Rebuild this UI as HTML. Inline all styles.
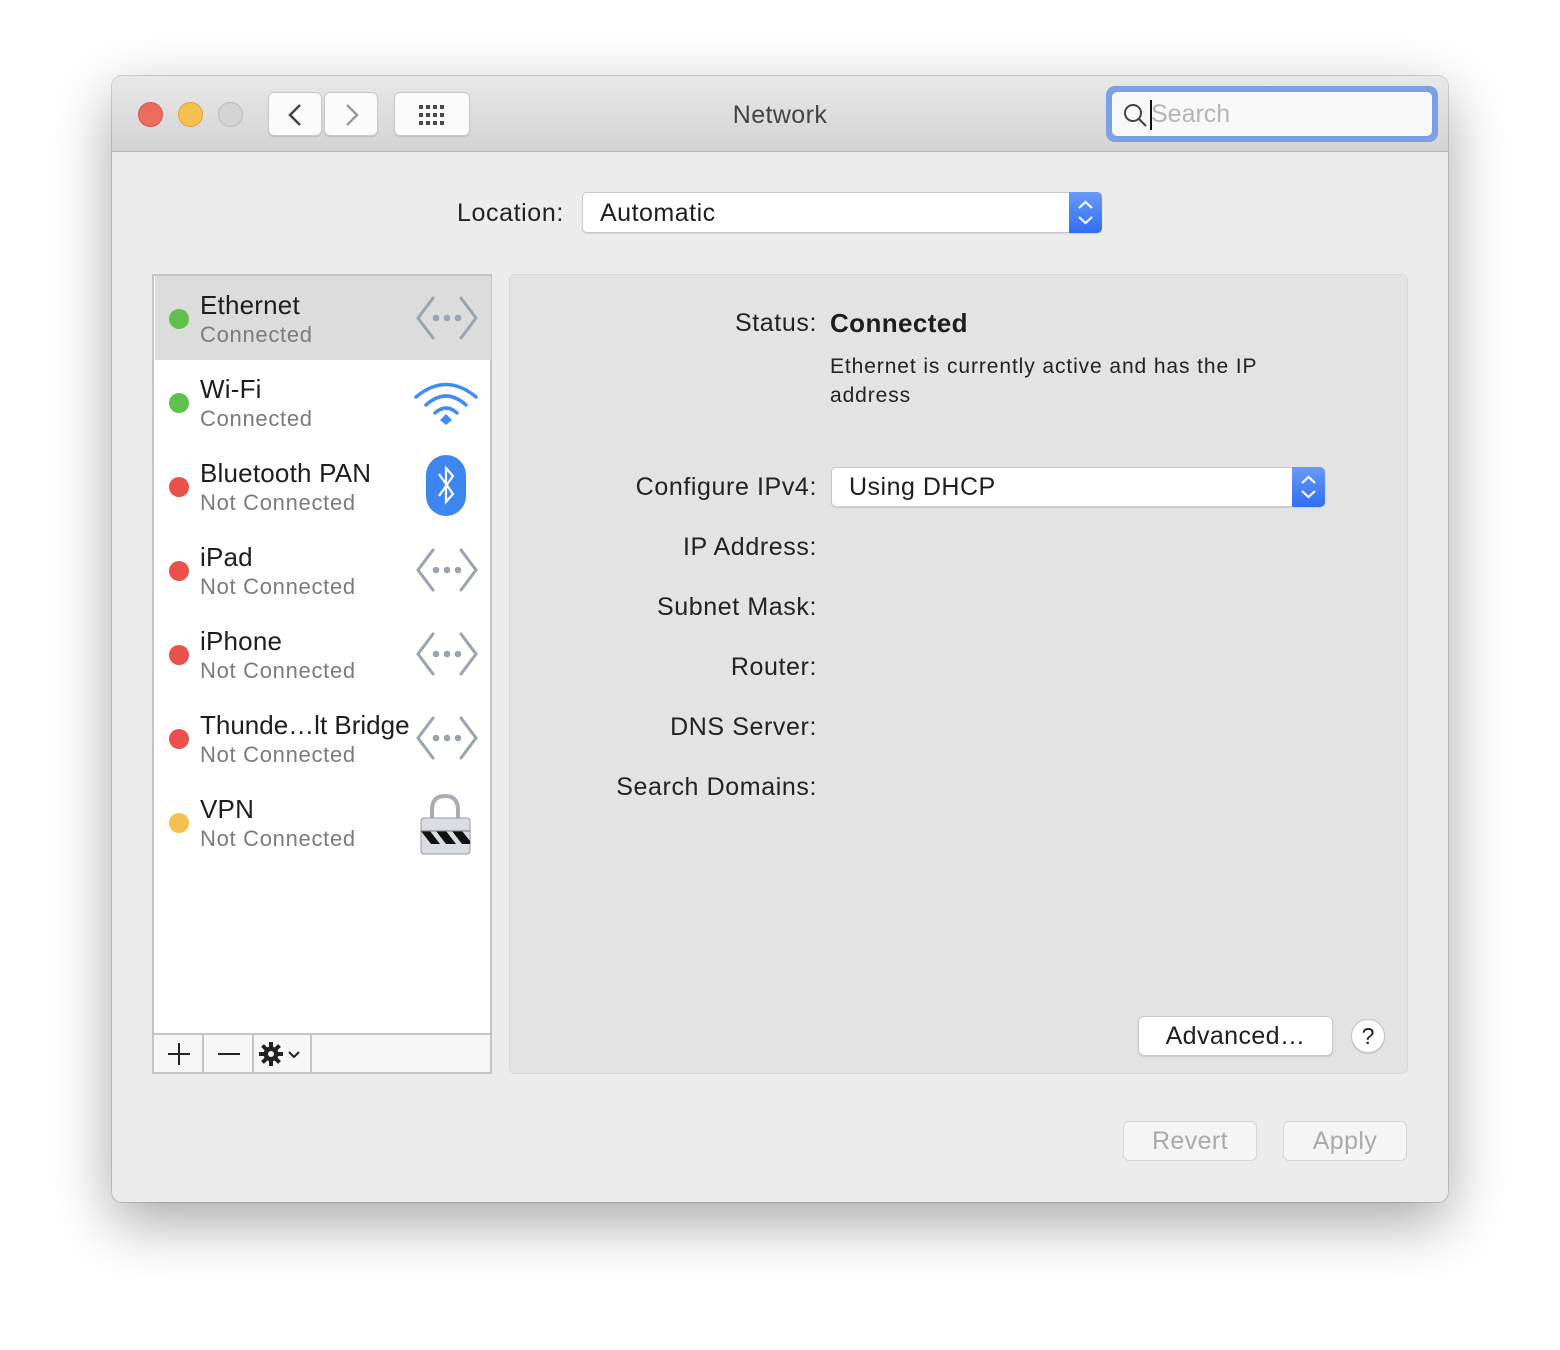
<!DOCTYPE html>
<html><head><meta charset="utf-8"><style>
*{box-sizing:border-box;margin:0;padding:0}
body{width:1560px;height:1350px;background:#fff;font-family:"Liberation Sans",sans-serif;position:relative;overflow:hidden}
.win{position:absolute;left:112px;top:76px;width:1336px;height:1126px;background:#ececec;border-radius:10px;box-shadow:0 20px 60px rgba(0,0,0,.35),0 0 0 1px rgba(0,0,0,.15);overflow:hidden}
.tb{position:absolute;left:0;top:0;width:100%;height:76px;background:linear-gradient(#e8e8e8,#d3d3d3);border-bottom:1px solid #b5b5b5}
.dot{position:absolute;top:26px;width:25px;height:25px;border-radius:50%}
.btn{position:absolute;background:#fbfbfb;border:1px solid #c8c8c8;border-radius:6px;box-shadow:0 1px 1px rgba(0,0,0,.12)}
.abs{position:absolute}
.lbl{position:absolute;font-size:25px;color:#222;text-align:right;letter-spacing:0.6px}
.row{position:absolute;left:1px;width:336px;height:84px}
.row .n{position:absolute;left:45px;top:14px;font-size:26px;color:#1e1e1e;letter-spacing:0.2px}
.row .s{position:absolute;left:45px;top:46px;font-size:22px;color:#7b7b7b;letter-spacing:0.7px}
.row .d{position:absolute;left:14px;top:33px;width:20px;height:20px;border-radius:50%}
.row svg{position:absolute;left:260px;top:20px}
</style></head><body>
<div class="win">
 <div class="tb">
  <div class="dot" style="left:26px;background:#ed6a5e;border:1px solid #d5554a"></div>
  <div class="dot" style="left:66px;background:#f5c04f;border:1px solid #d9a43a"></div>
  <div class="dot" style="left:106px;background:#d4d4d4;border:1px solid #bbb"></div>
  <div class="btn" style="left:156px;top:16px;width:54px;height:44px"><svg width="54" height="44"><path d="M31 12 L21 22 L31 32" stroke="#444" stroke-width="2.5" fill="none"/></svg></div>
  <div class="btn" style="left:212px;top:16px;width:54px;height:44px"><svg width="54" height="44"><path d="M22 12 L32 22 L22 32" stroke="#999" stroke-width="2.5" fill="none"/></svg></div>
  <div class="btn" style="left:282px;top:16px;width:76px;height:44px"><svg width="76" height="44"><g fill="#4a4a4a"><rect x="24" y="12" width="4" height="4"/><rect x="31" y="12" width="4" height="4"/><rect x="38" y="12" width="4" height="4"/><rect x="45" y="12" width="4" height="4"/><rect x="24" y="20" width="4" height="4"/><rect x="31" y="20" width="4" height="4"/><rect x="38" y="20" width="4" height="4"/><rect x="45" y="20" width="4" height="4"/><rect x="24" y="28" width="4" height="4"/><rect x="31" y="28" width="4" height="4"/><rect x="38" y="28" width="4" height="4"/><rect x="45" y="28" width="4" height="4"/></g></svg></div>
  <div class="abs" style="left:0;width:100%;top:25px;text-align:center;font-size:25px;color:#444;letter-spacing:0.4px">Network</div>
  <div class="abs" style="left:994px;top:10px;width:332px;height:56px;border-radius:9px;background:#7e9fe2"></div>
  <div class="abs" style="left:1000px;top:16px;width:320px;height:44px;border-radius:5px;background:#f8f8f8"><svg class="abs" style="left:10px;top:10px" width="28" height="28"><circle cx="11" cy="11" r="8" stroke="#444" stroke-width="2" fill="none"/><path d="M17 17 L24 24" stroke="#444" stroke-width="2.2"/></svg><div class="abs" style="left:38px;top:8px;width:2px;height:30px;background:#111"></div><div class="abs" style="left:39px;top:8px;font-size:25px;color:#b5b5b5">Search</div></div>
 </div>
 <div class="lbl" style="left:345px;top:123px;text-align:left">Location:</div>
 <div class="abs" style="left:470px;top:116px;width:520px;height:41px;background:#fff;border:1px solid #c8c8c8;border-radius:5px;box-shadow:0 1px 1px rgba(0,0,0,.1)"><div class="abs" style="left:17px;top:6px;font-size:25px;color:#1e1e1e;letter-spacing:0.5px">Automatic</div><div class="abs" style="right:-1px;top:-1px;width:33px;height:41px;background:linear-gradient(#6a9bf7,#2f6ef2);border-radius:0 5px 5px 0"><svg width="33" height="41"><path d="M10 16 L16.5 10 L23 16 M10 25 L16.5 31 L23 25" stroke="#fff" stroke-width="2.2" fill="none"/></svg></div></div>

 <div class="abs" style="left:40px;top:198px;width:340px;height:800px;background:#fff;border:2px solid #c4c4c4">
  <div class="row" style="top:0;background:#dcdcdc"><div class="d" style="background:#5fc04e"></div><div class="n">Ethernet</div><div class="s">Connected</div>
   <svg width="64" height="44"><g stroke="#9aa3b2" stroke-width="3" fill="none" stroke-linecap="round"><path d="M18 2 L3 22 L18 42 M46 2 L61 22 L46 42"/></g><g fill="#9aa3b2"><circle cx="21" cy="22" r="3.3"/><circle cx="32" cy="22" r="3.3"/><circle cx="43" cy="22" r="3.3"/></g></svg></div>
  <div class="row" style="top:84px"><div class="d" style="background:#5fc04e"></div><div class="n">Wi-Fi</div><div class="s">Connected</div>
   <svg width="66" height="50" style="top:18px;left:258px"><g stroke="#3e8ef0" stroke-width="3.5" fill="none" stroke-linecap="round"><path d="M3 19 Q33 -6 63 19"/><path d="M13 27 Q33 9 53 27"/><path d="M22 35 Q33 25 44 35"/></g><path d="M27 42 L33 36 L39 42 L33 47Z" fill="#3e8ef0"/></svg></div>
  <div class="row" style="top:168px"><div class="d" style="background:#e9524a"></div><div class="n">Bluetooth PAN</div><div class="s">Not Connected</div>
   <svg width="64" height="64" style="top:10px;left:258px"><rect x="13" y="1" width="40" height="61" rx="20" fill="#3d85ef"/><path d="M26 20 L40 40 L33 48 L33 14 L40 22 L26 42" stroke="#fff" stroke-width="2.2" fill="none"/></svg></div>
  <div class="row" style="top:252px"><div class="d" style="background:#e9524a"></div><div class="n">iPad</div><div class="s">Not Connected</div>
   <svg width="64" height="44"><g stroke="#9aa3b2" stroke-width="3" fill="none" stroke-linecap="round"><path d="M18 2 L3 22 L18 42 M46 2 L61 22 L46 42"/></g><g fill="#9aa3b2"><circle cx="21" cy="22" r="3.3"/><circle cx="32" cy="22" r="3.3"/><circle cx="43" cy="22" r="3.3"/></g></svg></div>
  <div class="row" style="top:336px"><div class="d" style="background:#e9524a"></div><div class="n">iPhone</div><div class="s">Not Connected</div>
   <svg width="64" height="44"><g stroke="#9aa3b2" stroke-width="3" fill="none" stroke-linecap="round"><path d="M18 2 L3 22 L18 42 M46 2 L61 22 L46 42"/></g><g fill="#9aa3b2"><circle cx="21" cy="22" r="3.3"/><circle cx="32" cy="22" r="3.3"/><circle cx="43" cy="22" r="3.3"/></g></svg></div>
  <div class="row" style="top:420px"><div class="d" style="background:#e9524a"></div><div class="n" style="letter-spacing:0">Thunde…lt Bridge</div><div class="s">Not Connected</div>
   <svg width="64" height="44"><g stroke="#9aa3b2" stroke-width="3" fill="none" stroke-linecap="round"><path d="M18 2 L3 22 L18 42 M46 2 L61 22 L46 42"/></g><g fill="#9aa3b2"><circle cx="21" cy="22" r="3.3"/><circle cx="32" cy="22" r="3.3"/><circle cx="43" cy="22" r="3.3"/></g></svg></div>
  <div class="row" style="top:504px"><div class="d" style="background:#f5c04f"></div><div class="n">VPN</div><div class="s">Not Connected</div>
   <svg width="64" height="66" style="top:10px;left:257px"><path d="M20 30 V20 Q20 6 33 6 Q46 6 46 20 V30" stroke="#a8adb5" stroke-width="4" fill="none"/><rect x="9" y="28" width="49" height="36" rx="3" fill="#d9dde3" stroke="#999" stroke-width="1"/><path d="M9 41 H18 L28 54 H19Z M24 41 H34 L44 54 H34Z M40 41 H50 L58 51 V54 H50Z" fill="#111"/><path d="M9 41 H58" stroke="#777"/></svg></div>
  <div class="abs" style="left:0;top:757px;width:336px;height:39px;background:#f6f6f6;border-top:2px solid #c4c4c4">
   <div class="abs" style="left:48px;top:0;width:2px;height:39px;background:#c4c4c4"></div>
   <div class="abs" style="left:98px;top:0;width:2px;height:39px;background:#c4c4c4"></div>
   <div class="abs" style="left:156px;top:0;width:2px;height:39px;background:#c4c4c4"></div>
   <svg class="abs" style="left:0;top:0" width="160" height="38"><path d="M14 19 H36 M25 8 V30 M64 19 H86" stroke="#222" stroke-width="2"/><g transform="translate(117 19)"><circle r="7.5" fill="#222"/><g stroke="#222" stroke-width="4"><path d="M0 -12 V12 M-12 0 H12 M-8.5 -8.5 L8.5 8.5 M-8.5 8.5 L8.5 -8.5"/></g><circle r="3" fill="#f6f6f6"/></g><path d="M135 17 L140 22 L145 17" stroke="#222" stroke-width="2" fill="none"/></svg>
  </div>
 </div>

 <div class="abs" style="left:397px;top:198px;width:899px;height:800px;background:#e3e3e3;border:1px solid #d8d8d8;border-radius:6px"></div>
 <div class="lbl" style="top:233px;right:631px">Status:</div>
 <div class="abs" style="left:718px;top:232px;font-size:26px;font-weight:bold;color:#1e1e1e;letter-spacing:0.4px">Connected</div>
 <div class="abs" style="left:718px;top:276px;font-size:21px;line-height:29px;color:#222;width:470px;letter-spacing:0.9px">Ethernet is currently active and has the IP address</div>
 <div class="lbl" style="top:397px;right:631px">Configure IPv4:</div>
 <div class="abs" style="left:719px;top:391px;width:494px;height:40px;background:#fff;border:1px solid #c8c8c8;border-radius:5px;box-shadow:0 1px 1px rgba(0,0,0,.1)"><div class="abs" style="left:17px;top:5px;font-size:25px;color:#1e1e1e;letter-spacing:0.5px">Using DHCP</div><div class="abs" style="right:-1px;top:-1px;width:33px;height:40px;background:linear-gradient(#6a9bf7,#2f6ef2);border-radius:0 5px 5px 0"><svg width="33" height="40"><path d="M10 16 L16.5 10 L23 16 M10 24 L16.5 30 L23 24" stroke="#fff" stroke-width="2.2" fill="none"/></svg></div></div>
 <div class="lbl" style="top:457px;right:631px">IP Address:</div>
 <div class="lbl" style="top:517px;right:631px">Subnet Mask:</div>
 <div class="lbl" style="top:577px;right:631px">Router:</div>
 <div class="lbl" style="top:637px;right:631px">DNS Server:</div>
 <div class="lbl" style="top:697px;right:631px">Search Domains:</div>
 <div class="btn" style="left:1026px;top:940px;width:195px;height:40px;text-align:center;font-size:25px;line-height:38px;color:#1e1e1e;background:#fff;letter-spacing:0.4px">Advanced…</div>
 <div class="abs" style="left:1239px;top:943px;width:34px;height:34px;border-radius:50%;background:#fff;border:1px solid #c4c4c4;box-shadow:0 1px 1px rgba(0,0,0,.15);text-align:center;font-size:23px;line-height:32px;color:#222">?</div>
 <div class="btn" style="left:1011px;top:1045px;width:134px;height:40px;text-align:center;font-size:25px;line-height:38px;color:#aaa;background:#f5f5f5;border-color:#d5d5d5;box-shadow:none;letter-spacing:0.4px">Revert</div>
 <div class="btn" style="left:1171px;top:1045px;width:124px;height:40px;text-align:center;font-size:25px;line-height:38px;color:#aaa;background:#f5f5f5;border-color:#d5d5d5;box-shadow:none;letter-spacing:0.4px">Apply</div>
</div>
</body></html>
